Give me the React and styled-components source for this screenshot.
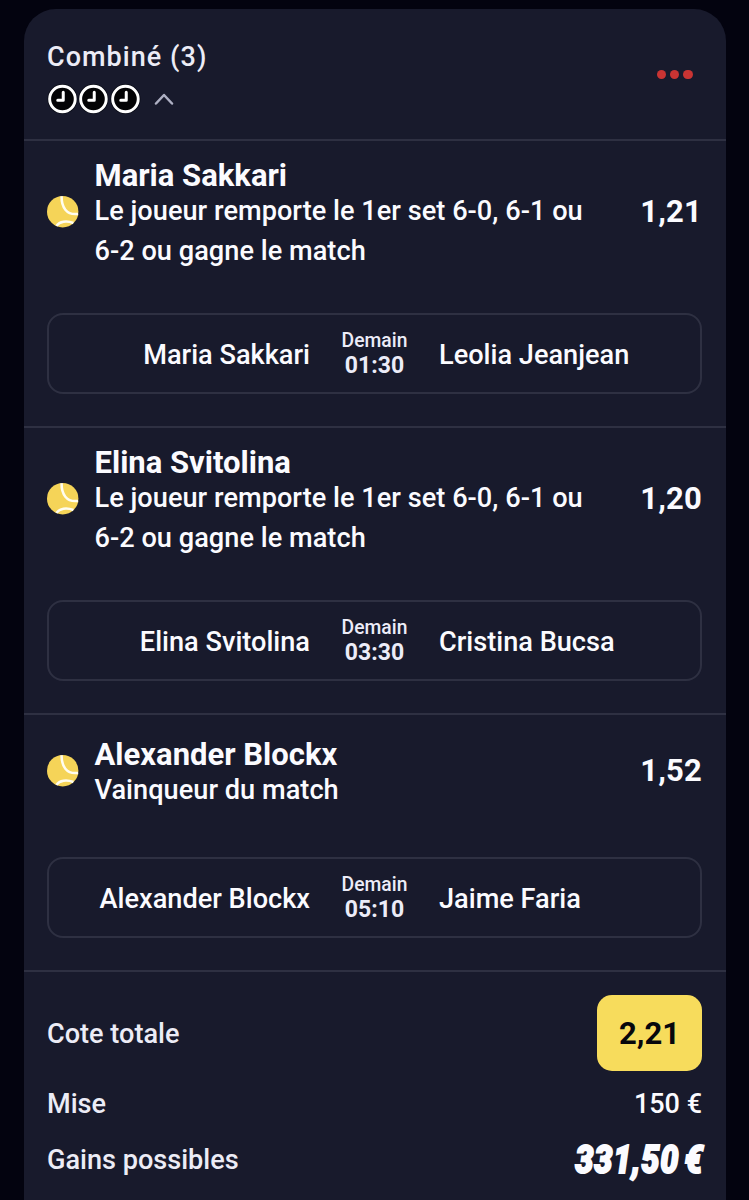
import React from 'react';
import styled, { createGlobalStyle } from 'styled-components';

const GlobalStyle = createGlobalStyle`
  *, *::before, *::after { box-sizing: border-box; }
  html { background: #03030f; }
  body {
    margin: 0;
    overflow: hidden;
    background: #03030f;
    font-family: Roboto, "Liberation Sans", sans-serif;
    color: #fbfbff;
  }
`;

const Page = styled.main`
  height: 1200px;
  padding: 9px 23.5px 0;
  overflow: hidden;
`;

const Card = styled.article`
  min-height: 1240px;
  border-radius: 32px 32px 0 0;
  background: #181a2c;
`;

const Header = styled.header`
  display: flex;
  justify-content: space-between;
  height: 132px;
  padding: 29px 33px 0 23.5px;
  border-bottom: 2px solid #2e3042;
`;

const Title = styled.h1`
  margin: 0;
  font-size: 27px;
  line-height: 38px;
  font-weight: 500;
  letter-spacing: 1.05px;
  color: #ececf6;
`;

const Statuses = styled.div`
  display: flex;
  align-items: center;
  height: 32px;
  margin-top: 7px;
`;

const Clock = styled.svg`
  width: 31.3px;
  height: 32px;
  overflow: visible;
`;

const Chevron = styled.svg`
  width: 20px;
  height: 12px;
  margin-left: 13.2px;
`;

const MenuButton = styled.button`
  display: flex;
  gap: 4px;
  align-self: flex-start;
  margin-top: 31.5px;
  padding: 0;
  border: 0;
  background: none;
`;

const Dot = styled.span`
  width: 9.2px;
  height: 9.2px;
  border-radius: 50%;
  background: #c93433;
`;

const Leg = styled.section`
  padding: 0 23.5px 32px;
  border-bottom: 2px solid #2e3042;
`;

const Selection = styled.div`
  display: flex;
  align-items: center;
  min-height: 110px;
  padding: 10px 0 9px;
  margin-bottom: 32px;
`;

const Ball = styled.svg`
  flex: none;
  width: 32px;
  height: 32px;
  margin-right: 15.5px;
`;

const Pick = styled.div`
  flex: 1;
  padding-top: 7px;
`;

const Player = styled.h2`
  margin: 0;
  font-size: 31px;
  line-height: 35px;
  font-weight: 700;
`;

const Market = styled.p`
  width: 510px;
  margin: -1px 0 1px;
  font-size: 27.15px;
  line-height: 39.5px;
  font-weight: 500;
  letter-spacing: 0.03px;
`;

const Odds = styled.span`
  padding-top: 1px;
  font-size: 31px;
  line-height: 36px;
  font-weight: 700;
  letter-spacing: 0.2px;
`;

const Match = styled.div`
  display: grid;
  grid-template-columns: 1fr 66px 1fr;
  align-items: center;
  column-gap: 31.5px;
  height: 81px;
  border: 2px solid #2e3042;
  border-radius: 16px;
`;

const Team = styled.span`
  padding-top: 2px;
  font-size: 27.15px;
  line-height: 32px;
  font-weight: 500;
  white-space: nowrap;
  text-align: ${({ $align }) => $align};
`;

const Kickoff = styled.div`
  display: flex;
  flex-direction: column;
  align-items: center;
  color: #ececf8;
`;

const Day = styled.span`
  font-size: 19.3px;
  line-height: 24px;
  font-weight: 500;
`;

const Time = styled.span`
  font-size: 23px;
  line-height: 26px;
  font-weight: 700;
`;

const Summary = styled.footer`
  display: flex;
  flex-direction: column;
  padding: 23px 23.5px 0;
`;

const SummaryRow = styled.div`
  display: flex;
  align-items: center;
  justify-content: space-between;
  height: ${({ $height }) => $height}px;
`;

const Label = styled.span`
  padding-top: 2px;
  font-size: 27.1px;
  font-weight: 500;
  color: #ececf6;
`;

const TotalOdds = styled.span`
  display: grid;
  place-items: center;
  width: 105px;
  height: 76px;
  padding-top: 1px;
  border-radius: 15px;
  background: #f7dc5c;
  color: #07070c;
  font-size: 31px;
  font-weight: 700;
`;

const Stake = styled.span`
  padding-top: 2px;
  font-size: 27px;
  font-weight: 500;
`;

const Winnings = styled.span`
  padding-top: 2px;
  margin-right: -2px;
  font-size: 39px;
  line-height: 44px;
  font-weight: 900;
  font-style: italic;
  letter-spacing: 0.9px;
  word-spacing: -4px;
  white-space: nowrap;
  transform: scaleX(0.83);
  transform-origin: right center;
  -webkit-text-stroke: 2px #fbfbff;
`;

const ClockIcon = () => (
  <Clock viewBox="0 0 31.2 32">
    <circle cx="15.4" cy="16" r="15" fill="#080a14" />
    <circle cx="15.4" cy="16" r="12.8" fill="#030305" stroke="#fff" strokeWidth="2.9" />
    <path d="M16.2 9.2V17.3H10.7" fill="none" stroke="#fff" strokeWidth="3" strokeLinecap="round" strokeLinejoin="round" />
  </Clock>
);

const BallIcon = () => (
  <Ball viewBox="0 0 32 32">
    <circle cx="15.7" cy="15.7" r="15.7" fill="#f5d458" />
    <g fill="none" stroke="#fffdf0" strokeWidth="2.5">
      <path d="M14.6 .2C14.4 10.8 19.3 19.6 31.1 17.9" />
      <path d="M9.4 29.9C12.6 25.3 19.5 24.2 26.4 27" />
    </g>
  </Ball>
);

const legs = [
  {
    player: 'Maria Sakkari',
    market: 'Le joueur remporte le 1er set 6-0, 6-1 ou 6-2 ou gagne le match',
    odds: '1,21',
    time: '01:30',
    away: 'Leolia Jeanjean',
  },
  {
    player: 'Elina Svitolina',
    market: 'Le joueur remporte le 1er set 6-0, 6-1 ou 6-2 ou gagne le match',
    odds: '1,20',
    time: '03:30',
    away: 'Cristina Bucsa',
  },
  {
    player: 'Alexander Blockx',
    market: 'Vainqueur du match',
    odds: '1,52',
    time: '05:10',
    away: 'Jaime Faria',
  },
];

export default function App() {
  return (
    <Page>
      <GlobalStyle />
      <Card>
        <Header>
          <div>
            <Title>Combiné (3)</Title>
            <Statuses>
              {legs.map((leg) => <ClockIcon key={leg.player} />)}
              <Chevron viewBox="0 0 20 12" fill="none" stroke="#aeb0c3" strokeWidth="2.5" strokeLinecap="round" strokeLinejoin="round">
                <path d="M2 10.5L10 2L18 10.5" />
              </Chevron>
            </Statuses>
          </div>
          <MenuButton aria-label="Options">
            <Dot /><Dot /><Dot />
          </MenuButton>
        </Header>
        {legs.map((leg) => (
          <Leg key={leg.player}>
            <Selection>
              <BallIcon />
              <Pick>
                <Player>{leg.player}</Player>
                <Market>{leg.market}</Market>
              </Pick>
              <Odds>{leg.odds}</Odds>
            </Selection>
            <Match>
              <Team $align="right">{leg.player}</Team>
              <Kickoff>
                <Day>Demain</Day>
                <Time>{leg.time}</Time>
              </Kickoff>
              <Team $align="left">{leg.away}</Team>
            </Match>
          </Leg>
        ))}
        <Summary>
          <SummaryRow $height={76}>
            <Label>Cote totale</Label>
            <TotalOdds>2,21</TotalOdds>
          </SummaryRow>
          <SummaryRow $height={64}>
            <Label>Mise</Label>
            <Stake>150 €</Stake>
          </SummaryRow>
          <SummaryRow $height={48}>
            <Label>Gains possibles</Label>
            <Winnings>331,50 €</Winnings>
          </SummaryRow>
        </Summary>
      </Card>
    </Page>
  );
}
